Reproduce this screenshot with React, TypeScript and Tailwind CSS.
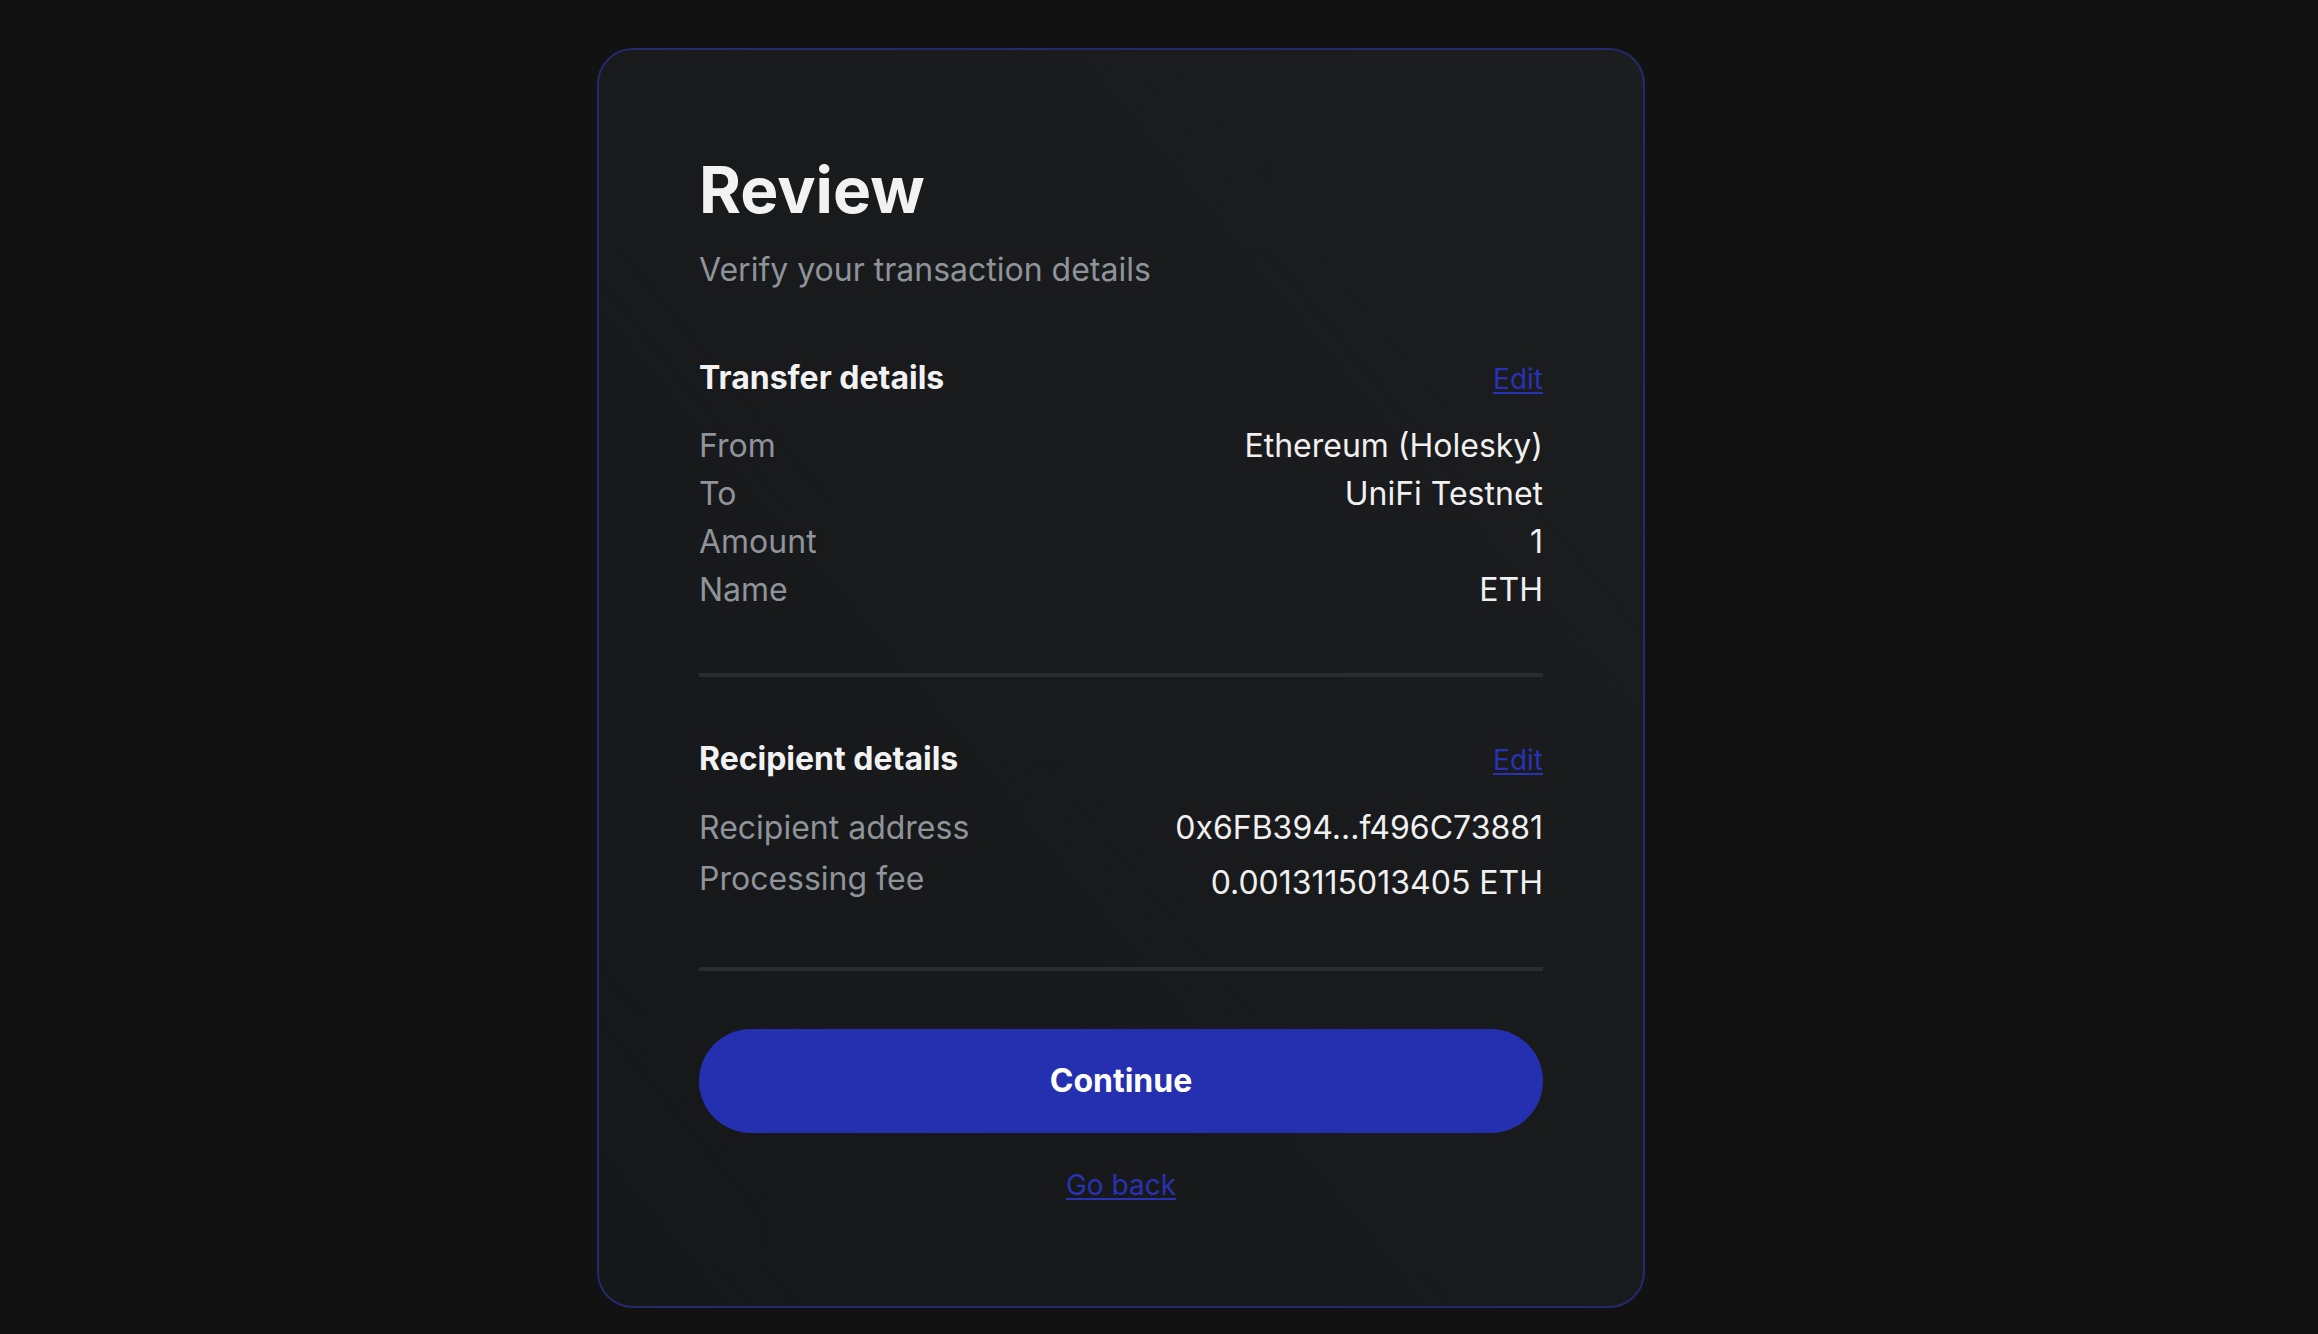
const transferRows = [
  { label: 'From', value: 'Ethereum (Holesky)' },
  { label: 'To', value: 'UniFi Testnet' },
  { label: 'Amount', value: '1' },
  { label: 'Name', value: 'ETH' },
];

function SectionHeader({ title }: { title: string }) {
  return (
    <div className="flex items-baseline justify-between">
      <h2 className="text-[32px] leading-[48px] font-bold text-[#f2f2f3]">{title}</h2>
      <a href="#" className="text-[28px] leading-[42px] text-[#2832b4] underline underline-offset-[3px]">
        Edit
      </a>
    </div>
  );
}

export default function App() {
  return (
    <div
      className="min-h-screen bg-[#121212] flex justify-center pr-[76px] pt-[48px] pb-[26px]"
      style={{ fontFamily: 'Inter, "Noto Sans", sans-serif' }}
    >
      <div className="w-[1048px] rounded-[36px] border-2 border-[#252a6c] bg-gradient-to-bl from-[#1c1d1f] to-[#161719] px-[100px] pt-[100px] pb-[98px] flex flex-col">
        {/* header */}
        <h1 className="text-[64px] leading-[80px] font-bold text-[#f2f2f3]">Review</h1>
        <p className="mt-[16px] text-[32px] leading-[48px] text-[#8f939a]">Verify your transaction details</p>

        {/* transfer details */}
        <div className="mt-[60px]">
          <SectionHeader title="Transfer details" />
          <div className="mt-[20px] flex flex-col">
            {transferRows.map((row) => (
              <div key={row.label} className="flex justify-between text-[32px] leading-[48px]">
                <span className="text-[#8f939a]">{row.label}</span>
                <span className="text-[#f0f0f1]">{row.value}</span>
              </div>
            ))}
          </div>
        </div>

        <div className="mt-[59px] h-1 bg-[#2b2c30]" />

        {/* recipient details */}
        <div className="mt-[58px]">
          <SectionHeader title="Recipient details" />
          <div className="mt-[21px] flex flex-col text-[32px] leading-[48px]">
            <div className="flex justify-between h-[51px]">
              <span className="text-[#8f939a]">Recipient address</span>
              <span className="text-[#f0f0f1]">0x6FB394...f496C73881</span>
            </div>
            <div className="flex justify-between items-start">
              <span className="text-[#8f939a]">Processing fee</span>
              <span className="pt-[4px] text-[#f0f0f1]">0.0013115013405 ETH</span>
            </div>
          </div>
        </div>

        <div className="mt-[60px] h-1 bg-[#2b2c30]" />

        <button className="mt-[58px] h-[104px] w-full rounded-full bg-[#2530b0] text-[32px] font-bold text-white">
          Continue
        </button>

        <a href="#" className="mt-[31px] self-center text-[28px] leading-[42px] text-[#2832b4] underline underline-offset-[3px]">
          Go back
        </a>
      </div>
    </div>
  );
}
